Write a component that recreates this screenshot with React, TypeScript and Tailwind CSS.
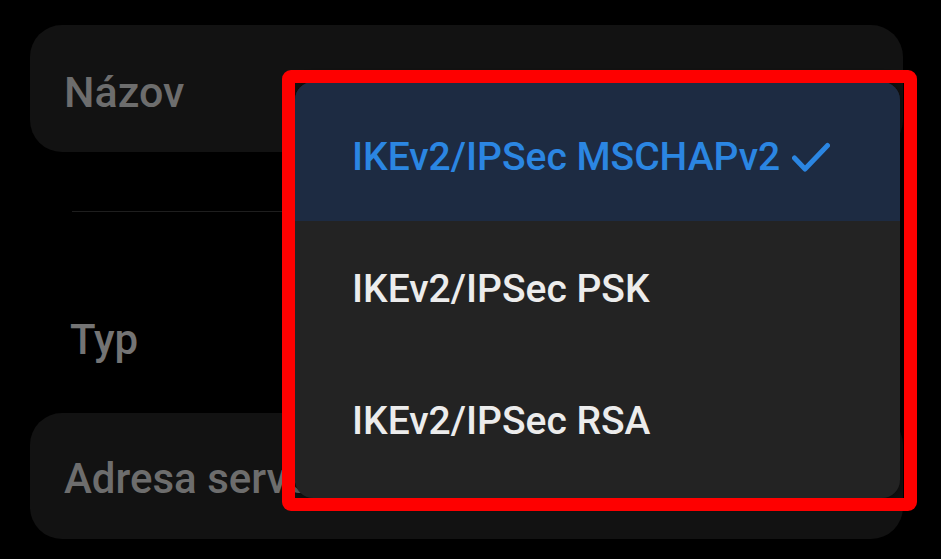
const items = [
  { label: 'IKEv2/IPSec MSCHAPv2', selected: true },
  { label: 'IKEv2/IPSec PSK', selected: false },
  { label: 'IKEv2/IPSec RSA', selected: false },
];

function Check() {
  return (
    <svg width="38" height="31" viewBox="0 0 38 31" fill="none" className="ml-[12px] shrink-0">
      <polyline points="2.5,16 13,27 35.5,3.5" stroke="#2b86e2" strokeWidth="5" strokeLinecap="round" strokeLinejoin="round" />
    </svg>
  );
}

export default function App() {
  return (
    <div
      className="relative w-[941px] h-[559px] overflow-hidden bg-black pt-[25px] pl-[30px] pr-[38px]"
      style={{ fontFamily: 'Roboto, "Noto Sans", sans-serif' }}
    >
      {/* form behind the menu */}
      <div className="flex h-[127px] items-center rounded-[32px] bg-[#121212] pl-[34px] pt-[6px]">
        <span className="text-[43px] leading-[42px] font-medium text-[#6d6d6d]">Názov</span>
      </div>
      <div className="mx-[42px] mt-[59px] h-px bg-[#1e1e1e]" />
      <div className="mt-[107px] pl-[40px] text-[42px] leading-[42px] font-medium text-[#747474]">Typ</div>
      <div className="mt-[52px] flex h-[126px] items-center rounded-[32px] bg-[#121212] pl-[34px] pt-[6px]">
        <span className="text-[42px] leading-[42px] font-medium text-[#6d6d6d]">Adresa servera</span>
      </div>

      {/* dropdown */}
      <div className="absolute left-[295px] top-[82px] flex h-[416px] w-[605px] flex-col overflow-hidden rounded-[18px] bg-[#232323] shadow-[0_0_12px_rgba(0,0,0,0.6)]">
        {items.map((item) =>
          item.selected ? (
            <div key={item.label} className="flex h-[139px] items-center bg-[#1d2b42] pl-[57px] pt-[11px]">
              <span className="text-[39px] leading-[40px] font-medium text-[#2b86e2]">{item.label}</span>
              <Check />
            </div>
          ) : (
            <div key={item.label} className="flex h-[132px] items-center pl-[57px] pt-[4px]">
              <span className="text-[39px] leading-[40px] font-medium text-[#ececec]">{item.label}</span>
            </div>
          )
        )}
      </div>

      {/* highlight frame */}
      <div className="pointer-events-none absolute left-[282px] top-[70px] h-[441px] w-[635px] rounded-[9px] border-[13px] border-[#fe0000]" />
    </div>
  );
}
